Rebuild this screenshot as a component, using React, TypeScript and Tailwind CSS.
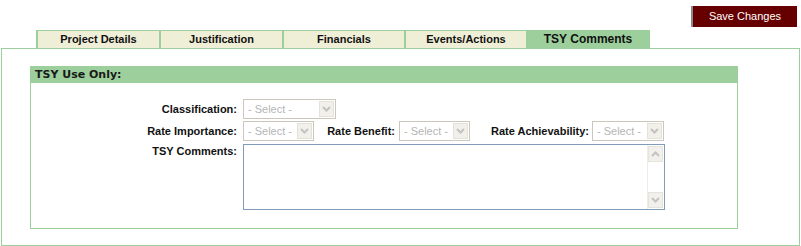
import React from "react";

const arial = { fontFamily: '"Liberation Sans", Arial, sans-serif' };
const verdana = { fontFamily: '"DejaVu Sans", Verdana, sans-serif' };

function Chevron({ up = false }: { up?: boolean }) {
  return (
    <svg width="9" height="6" viewBox="0 0 9 6" className={up ? "rotate-180" : ""}>
      <path d="M1 1 L4.5 4.5 L8 1" fill="none" stroke="#c3c3c3" strokeWidth="2" />
    </svg>
  );
}

function FakeSelect({ width }: { width: string }) {
  return (
    <div className={`${width} h-[20px] border border-[#cbc7bc] bg-white flex items-stretch p-[1px]`}>
      <div className="flex-1 flex items-center pl-[3px] text-[11px] font-normal text-[#b5b5b5]">- Select -</div>
      <div className="w-[15px] bg-[#f1f0ea] border border-[#e4e2d8] flex items-center justify-center">
        <Chevron />
      </div>
    </div>
  );
}

const tabs = ["Project Details", "Justification", "Financials", "Events/Actions"];
const tabWidths = ["w-[123px]", "w-[123px]", "w-[122px]", "w-[122px]"];

export default function App() {
  return (
    <div className="w-[801px] h-[246px] bg-white text-[#111]" style={arial}>
      <div className="flex justify-end pt-[6px] pr-[4px]">
        <button className="w-[106px] h-[21px] bg-[#660000] border-l-2 border-[#8a8a8a] text-white text-[11px] flex items-center justify-center">
          Save Changes
        </button>
      </div>

      <div className="flex pl-[36px] mt-[3px] h-[18px]">
        {tabs.map((t, i) => (
          <div
            key={t}
            className={`${tabWidths[i]} h-[18px] bg-[#efeed6] border-l-2 border-t border-[#9ccf9c] flex items-center justify-center text-[11px] font-bold`}
          >
            {t}
          </div>
        ))}
        <div className="w-[124px] h-[18px] bg-[#9ccf9c] flex items-center justify-center text-[12px] font-bold">
          TSY Comments
        </div>
      </div>

      <div className="ml-[1px] w-[799px] h-[198px] border border-[#9ccf9c] pt-[17px]">
        <div className="ml-[28px] w-[708px] h-[163px] border border-[#9ccf9c]">
          <div className="h-[16px] bg-[#9ccf9c] flex items-center pl-[4px] text-[11px] font-bold text-[#1a1a1a]" style={verdana}>
            TSY Use Only:
          </div>

          <div className="pt-[16px] text-[11px] font-bold">
            <div className="flex items-center h-[20px]">
              <div className="w-[207px] text-right pr-[1px]">Classification:</div>
              <div className="ml-[5px]">
                <FakeSelect width="w-[93px]" />
              </div>
            </div>

            <div className="flex items-center h-[20px] mt-[2px]">
              <div className="w-[207px] text-right pr-[1px]">Rate Importance:</div>
              <div className="ml-[5px]">
                <FakeSelect width="w-[71px]" />
              </div>
              <div className="w-[81px] text-right">Rate Benefit:</div>
              <div className="ml-[4px]">
                <FakeSelect width="w-[71px]" />
              </div>
              <div className="w-[119px] text-right">Rate Achievability:</div>
              <div className="ml-[3px]">
                <FakeSelect width="w-[72px]" />
              </div>
            </div>

            <div className="flex items-start mt-[3px]">
              <div className="w-[207px] text-right pr-[1px] -mt-[1px]">TSY Comments:</div>
              <div className="ml-[5px] w-[422px] h-[66px] border border-[#7f9db9] bg-white flex justify-end">
                <div className="w-[17px] h-full border-l border-[#eeede6] flex flex-col justify-between py-[1px] pr-[1px]">
                  <div className="h-[16px] bg-[#f1f0ea] border border-[#e6e4da] flex items-center justify-center">
                    <Chevron up />
                  </div>
                  <div className="h-[16px] bg-[#f1f0ea] border border-[#e6e4da] flex items-center justify-center">
                    <Chevron />
                  </div>
                </div>
              </div>
            </div>
          </div>
        </div>
      </div>
    </div>
  );
}
